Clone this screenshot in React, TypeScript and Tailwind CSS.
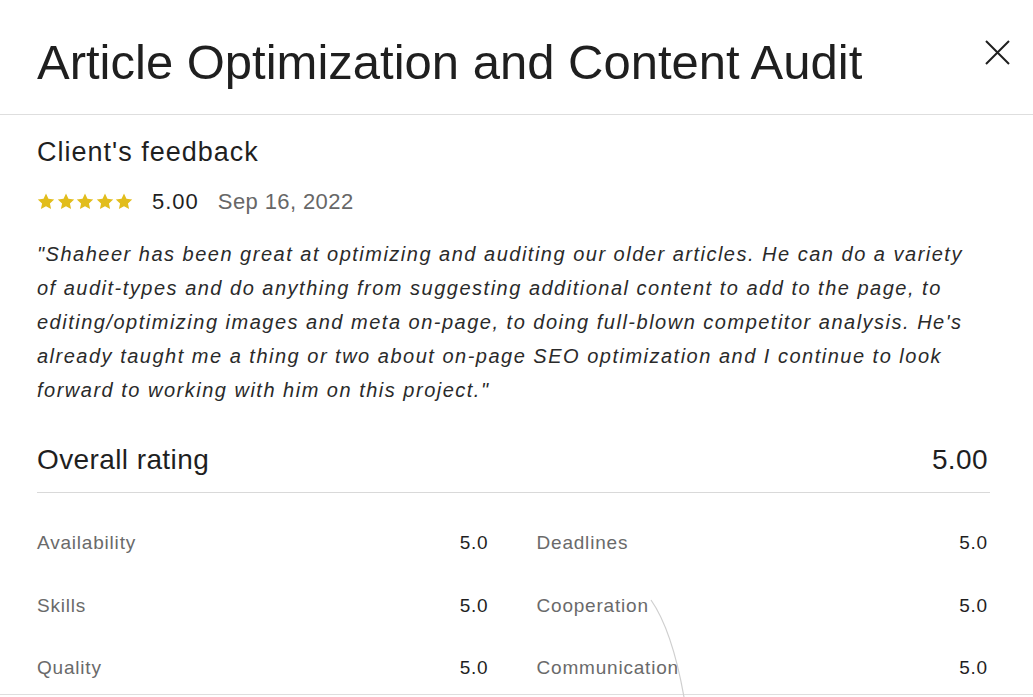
import React from "react";

const Star = () => (
  <svg width="18" height="17" viewBox="0 0 24 23" className="shrink-0">
    <path d="M12 0.8l3.3 7.1 7.8.9-5.8 5.3 1.6 7.7L12 17.9l-6.9 3.9 1.6-7.7L.9 8.8l7.8-.9z" fill="#e2bd1c" />
  </svg>
);

const rows: [string, string, string, string][] = [
  ["Availability", "5.0", "Deadlines", "5.0"],
  ["Skills", "5.0", "Cooperation", "5.0"],
  ["Quality", "5.0", "Communication", "5.0"],
];

export default function App() {
  return (
    <div
      className="relative w-[1033px] h-[697px] overflow-hidden bg-white text-[#1f1f1f]"
      style={{ fontFamily: '"Liberation Sans", Arial, sans-serif' }}
    >
      <div className="flex items-center justify-between pl-[37px] pr-[12px] h-[115px] border-b border-[#dedede]">
        <h1 className="text-[49px] leading-none pt-[10px]">Article Optimization and Content Audit</h1>
        <button className="w-[48px] h-[48px] flex items-center justify-center mb-[10px]">
          <svg width="25" height="25" viewBox="0 0 25 25" fill="none" stroke="#1f1f1f" strokeWidth="2">
            <path d="M1 1L24 24M24 1L1 24" />
          </svg>
        </button>
      </div>
      <div className="pl-[37px] pr-[45px]">
        <h2 className="text-[27px] leading-none tracking-[1px] mt-[24px]">Client's feedback</h2>
        <div className="flex items-center mt-[22px] h-[26px]">
          <div className="flex gap-[1.5px]">
            <Star /><Star /><Star /><Star /><Star />
          </div>
          <span className="ml-[19px] text-[22px] tracking-[1px]">5.00</span>
          <span className="ml-[19px] text-[22px] tracking-[0.4px] text-[#676767]">Sep 16, 2022</span>
        </div>
        <p className="italic text-[20px] leading-[34px] tracking-[1.5px] text-[#2a2a2a] mt-[23px] w-[950px]">
          "Shaheer has been great at optimizing and auditing our older articles. He can do a variety of audit-types and do anything from suggesting additional content to add to the page, to editing/optimizing images and meta on-page, to doing full-blown competitor analysis. He's already taught me a thing or two about on-page SEO optimization and I continue to look forward to working with him on this project."
        </p>
        <div className="flex items-center justify-between mt-[39px] pb-[18px] border-b border-[#d9d9d9] mr-[-2px]">
          <span className="text-[28px] leading-none tracking-[0.4px]">Overall rating</span>
          <span className="text-[28px] leading-none tracking-[0.4px] mr-[2px]">5.00</span>
        </div>
        <div className="grid grid-cols-2 gap-x-[48px] mt-[19px]">
          {rows.map((r, i) => (
            <React.Fragment key={i}>
              <div className="flex items-center justify-between h-[62.5px] text-[19px] tracking-[0.8px]">
                <span className="text-[#6a6a6a]">{r[0]}</span>
                <span className="text-[#1f1f1f]">{r[1]}</span>
              </div>
              <div className="flex items-center justify-between h-[62.5px] text-[19px] tracking-[0.8px]">
                <span className="text-[#6a6a6a]">{r[2]}</span>
                <span className="text-[#1f1f1f]">{r[3]}</span>
              </div>
            </React.Fragment>
          ))}
        </div>
      </div>
      <div className="absolute left-0 right-0 top-[694px] border-t border-[#dedede]" />
      <svg className="absolute left-0 top-0 pointer-events-none" width="1033" height="697">
        <path d="M651 600 Q672 630 684 697" stroke="#cfcfcf" strokeWidth="1.2" fill="none" />
      </svg>
    </div>
  );
}
